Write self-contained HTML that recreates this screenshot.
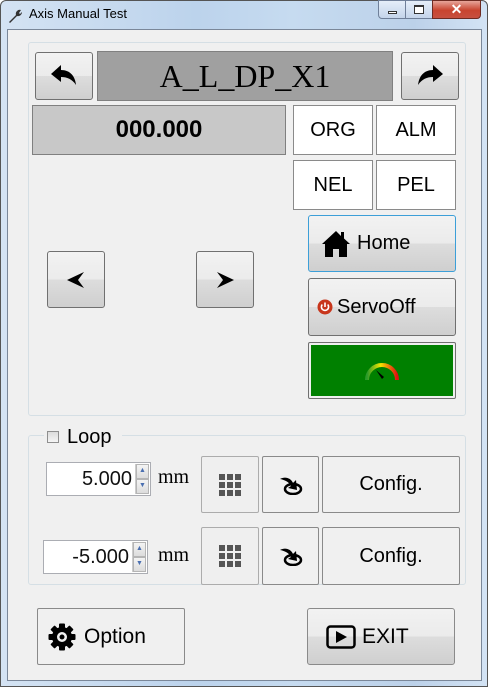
<!DOCTYPE html>
<html><head><meta charset="utf-8"><style>
*{box-sizing:border-box;margin:0;padding:0}
body{width:488px;height:687px;overflow:hidden;background:#fff;font-family:"Liberation Sans",sans-serif;position:relative}
.a{position:absolute}
.frame{left:0;top:0;width:488px;height:687px;border:1px solid #555;border-radius:6px 6px 0 0;background:linear-gradient(90deg,#d4e3f3 0%,#bcd3ec 40%,#c6dbf0 60%,#bcd1e9 85%,#d3e3f4 100%)}
.client{left:7px;top:29px;width:475px;height:652px;background:#f0f0f0;border:1px solid #7a8799}
.btn{position:absolute;border:1px solid #707070;border-radius:3px;background:linear-gradient(#f2f2f2 0%,#ebebeb 50%,#dddddd 50%,#cfcfcf 100%);display:flex;align-items:center;justify-content:center;color:#000}
.flat{position:absolute;border:1px solid #acacac;border-radius:2px;background:#efefef;display:flex;align-items:center;justify-content:center}
.lab{position:absolute;background:#fff;border:1px solid #8a8a8a;display:flex;align-items:center;justify-content:center;font-size:20px}
.grp{position:absolute;border:1px solid #d5dfe5;border-radius:3px}
.spin{position:absolute;background:#fff;border:1px solid #abadb3;font-family:"Liberation Sans",sans-serif;font-size:20px;text-align:right;padding-right:18px;line-height:32px;color:#111}
.spin .ud{position:absolute;right:1px;top:1px;width:14px;height:30px;border-left:1px solid #ccc}
.spin .ud i{display:block;height:15px;background:linear-gradient(#f4f4f4,#dcdcdc);border:1px solid #b5b5b5;font-style:normal;font-size:7px;color:#4a6fb0;line-height:12px;text-align:center}
.mm{position:absolute;font-family:"Liberation Serif",serif;font-size:20px}
.grid{display:grid;grid-template-columns:repeat(3,6px);gap:2px}
.grid b{width:6px;height:6px;background:#555;display:block}
</style></head><body>
<div class="a frame"></div>
<svg class="a" style="left:7px;top:8px" width="16" height="16" viewBox="0 0 16 16"><path d="M2 14 L9 7 A4 4 0 0 1 14 2 L12 5 L13 6 L15 4 A4 4 0 0 1 10 8 L3 15Z" fill="#333"/></svg>
<div class="a" style="left:29px;top:6px;font-size:13px;color:#000">Axis Manual Test</div>
<div class="a" style="left:378px;top:0;width:28px;height:19px;border:1px solid #6f7f99;border-radius:0 0 0 4px;background:linear-gradient(#e5eef9,#c4d4ea)"><div class="a" style="left:9px;top:10px;width:9px;height:3px;border:1px solid #333;background:#fff"></div></div>
<div class="a" style="left:405px;top:0;width:28px;height:19px;border:1px solid #6f7f99;background:linear-gradient(#e5eef9,#c4d4ea)"><div class="a" style="left:8px;top:4px;width:10px;height:9px;border:1px solid #333;border-top-width:2px;background:#fff"></div></div>
<div class="a" style="left:432px;top:0;width:49px;height:19px;border:1px solid #6e2b22;border-radius:0 0 4px 0;background:linear-gradient(#e7a59a,#c8442f 55%,#c75040);color:#fff;font-weight:bold;font-size:14px;text-align:center;line-height:16px">✕</div>
<div class="a client"></div>
<div class="grp" style="left:28px;top:42px;width:438px;height:374px"></div>

<div class="btn" style="left:35px;top:52px;width:58px;height:48px"><svg width="28" height="22" viewBox="0 0 28 22"><path d="M1 9 L11 0 L11 5 C20 5 25 11 26 20 C22 14 17 12 11 12 L11 17Z" fill="#000"/></svg></div>
<div class="a" style="left:97px;top:51px;width:296px;height:50px;background:#a0a0a0;border:1px solid #808080;font-family:'Liberation Serif',serif;font-size:32px;text-align:center;line-height:48px">A_L_DP_X1</div>
<div class="btn" style="left:401px;top:52px;width:58px;height:48px"><svg width="28" height="22" viewBox="0 0 28 22"><path d="M27 9 L17 0 L17 5 C8 5 3 11 2 20 C6 14 11 12 17 12 L17 17Z" fill="#000"/></svg></div>

<div class="a" style="left:32px;top:105px;width:254px;height:50px;background:#c8c8c8;border:1px solid #808080;font-size:24px;font-weight:bold;text-align:center;line-height:48px">000.000</div>
<div class="lab" style="left:293px;top:105px;width:80px;height:50px">ORG</div>
<div class="lab" style="left:376px;top:105px;width:80px;height:50px">ALM</div>
<div class="lab" style="left:293px;top:160px;width:80px;height:50px">NEL</div>
<div class="lab" style="left:376px;top:160px;width:80px;height:50px">PEL</div>

<div class="btn" style="left:47px;top:251px;width:58px;height:57px"><svg width="20" height="16" viewBox="0 0 20 16"><path d="M1 8 L18 0 L12 8 L18 16Z" fill="#000"/></svg></div>
<div class="btn" style="left:196px;top:251px;width:58px;height:57px"><svg width="20" height="16" viewBox="0 0 20 16"><path d="M19 8 L2 0 L8 8 L2 16Z" fill="#000"/></svg></div>

<div class="btn" style="left:308px;top:215px;width:148px;height:57px;border-color:#3c9fd8;justify-content:flex-start;padding-left:12px;font-size:20px"><svg width="30" height="28" viewBox="0 0 30 28"><path d="M15 1 L1 14 L4 14 L4 27 L12 27 L12 19 L18 19 L18 27 L26 27 L26 14 L29 14 L23 8.5 L23 2 L20 2 L20 6 Z" fill="#000"/></svg><span style="margin-left:6px">Home</span></div>
<div class="btn" style="left:308px;top:278px;width:148px;height:58px;justify-content:flex-start;padding-left:8px;font-size:20px"><svg width="16" height="16" viewBox="0 0 16 16"><circle cx="8" cy="8" r="7.5" fill="#c8361c"/><path d="M5.3 5.5 A3.6 3.6 0 1 0 10.7 5.5" fill="none" stroke="#fff" stroke-width="1.6"/><path d="M8 3.5 V8" stroke="#fff" stroke-width="1.6"/></svg><span style="margin-left:4px">ServoOff</span></div>
<div class="a" style="left:308px;top:342px;width:148px;height:57px;border:1px solid #707070;border-radius:2px;padding:2px;background:#f0f0f0"><div style="width:100%;height:100%;background:#008000;display:flex;align-items:center;justify-content:center"><svg width="36" height="22" viewBox="0 0 36 22"><defs><linearGradient id="g" x1="0" x2="1"><stop offset="0" stop-color="#2a9a2a"/><stop offset=".45" stop-color="#f2e600"/><stop offset="1" stop-color="#e01010"/></linearGradient></defs><path d="M3 20 A15 15 0 0 1 33 20" fill="none" stroke="url(#g)" stroke-width="4"/><path d="M12 10 L20 17 L18 19Z" fill="#000"/></svg></div></div>

<div class="grp" style="left:28px;top:435px;width:438px;height:150px"></div>
<div class="a" style="left:44px;top:426px;width:78px;height:20px;background:#f0f0f0"></div>
<div class="a" style="left:47px;top:431px;width:12px;height:12px;border:1px solid #8f8f8f;background:linear-gradient(#dcdcdc,#f5f5f5)"></div>
<div class="a" style="left:67px;top:426px;font-size:20px">Loop</div>

<div class="spin" style="left:46px;top:462px;width:105px;height:34px">5.000<div class="ud"><i>▲</i><i>▼</i></div></div>
<div class="mm" style="left:158px;top:466px">mm</div>
<div class="flat" style="left:201px;top:456px;width:58px;height:57px"><div class="grid"><b></b><b></b><b></b><b></b><b></b><b></b><b></b><b></b><b></b></div></div>
<div class="flat" style="left:262px;top:456px;width:57px;height:57px;border-color:#8a8a8a;background:#f0f0f0"><svg width="24" height="20" viewBox="0 0 24 20"><ellipse cx="14" cy="14" rx="8" ry="5" fill="none" stroke="#000" stroke-width="2.5"/><path d="M1 4 C6 1 12 3 14 8 L17 5 L18 15 L9 13 L12 11 C10 7 6 5 1 4Z" fill="#000"/></svg></div>
<div class="flat" style="left:322px;top:456px;width:138px;height:57px;border-color:#8a8a8a;background:#f0f0f0;font-size:20px">Config.</div>

<div class="spin" style="left:43px;top:540px;width:105px;height:34px">-5.000<div class="ud"><i>▲</i><i>▼</i></div></div>
<div class="mm" style="left:158px;top:544px">mm</div>
<div class="flat" style="left:201px;top:527px;width:58px;height:58px"><div class="grid"><b></b><b></b><b></b><b></b><b></b><b></b><b></b><b></b><b></b></div></div>
<div class="flat" style="left:262px;top:527px;width:57px;height:58px;border-color:#8a8a8a;background:#f0f0f0"><svg width="24" height="20" viewBox="0 0 24 20"><ellipse cx="14" cy="14" rx="8" ry="5" fill="none" stroke="#000" stroke-width="2.5"/><path d="M1 4 C6 1 12 3 14 8 L17 5 L18 15 L9 13 L12 11 C10 7 6 5 1 4Z" fill="#000"/></svg></div>
<div class="flat" style="left:322px;top:527px;width:138px;height:58px;border-color:#8a8a8a;background:#f0f0f0;font-size:20px">Config.</div>

<div class="flat" style="left:37px;top:608px;width:148px;height:57px;border-color:#8a8a8a;background:#f0f0f0;justify-content:flex-start;padding-left:10px;font-size:21px"><svg width="28" height="28" viewBox="0 0 28 28"><g fill="#000"><circle cx="14" cy="14" r="10"/><g id="t"><rect x="11" y="0.5" width="6" height="27" rx="1"/></g><use href="#t" transform="rotate(45 14 14)"/><use href="#t" transform="rotate(90 14 14)"/><use href="#t" transform="rotate(135 14 14)"/></g><circle cx="14" cy="14" r="5" fill="#f0f0f0"/><circle cx="14" cy="14" r="2.5" fill="#000"/></svg><span style="margin-left:8px">Option</span></div>
<div class="btn" style="left:307px;top:608px;width:148px;height:57px;border-color:#8a8a8a;justify-content:flex-start;padding-left:18px;font-size:21px"><svg width="30" height="24" viewBox="0 0 30 24"><rect x="1.5" y="1.5" width="27" height="21" rx="3" fill="none" stroke="#000" stroke-width="2.5"/><path d="M10 6 L21 12 L10 18Z" fill="#000"/></svg><span style="margin-left:6px">EXIT</span></div>
</body></html>
